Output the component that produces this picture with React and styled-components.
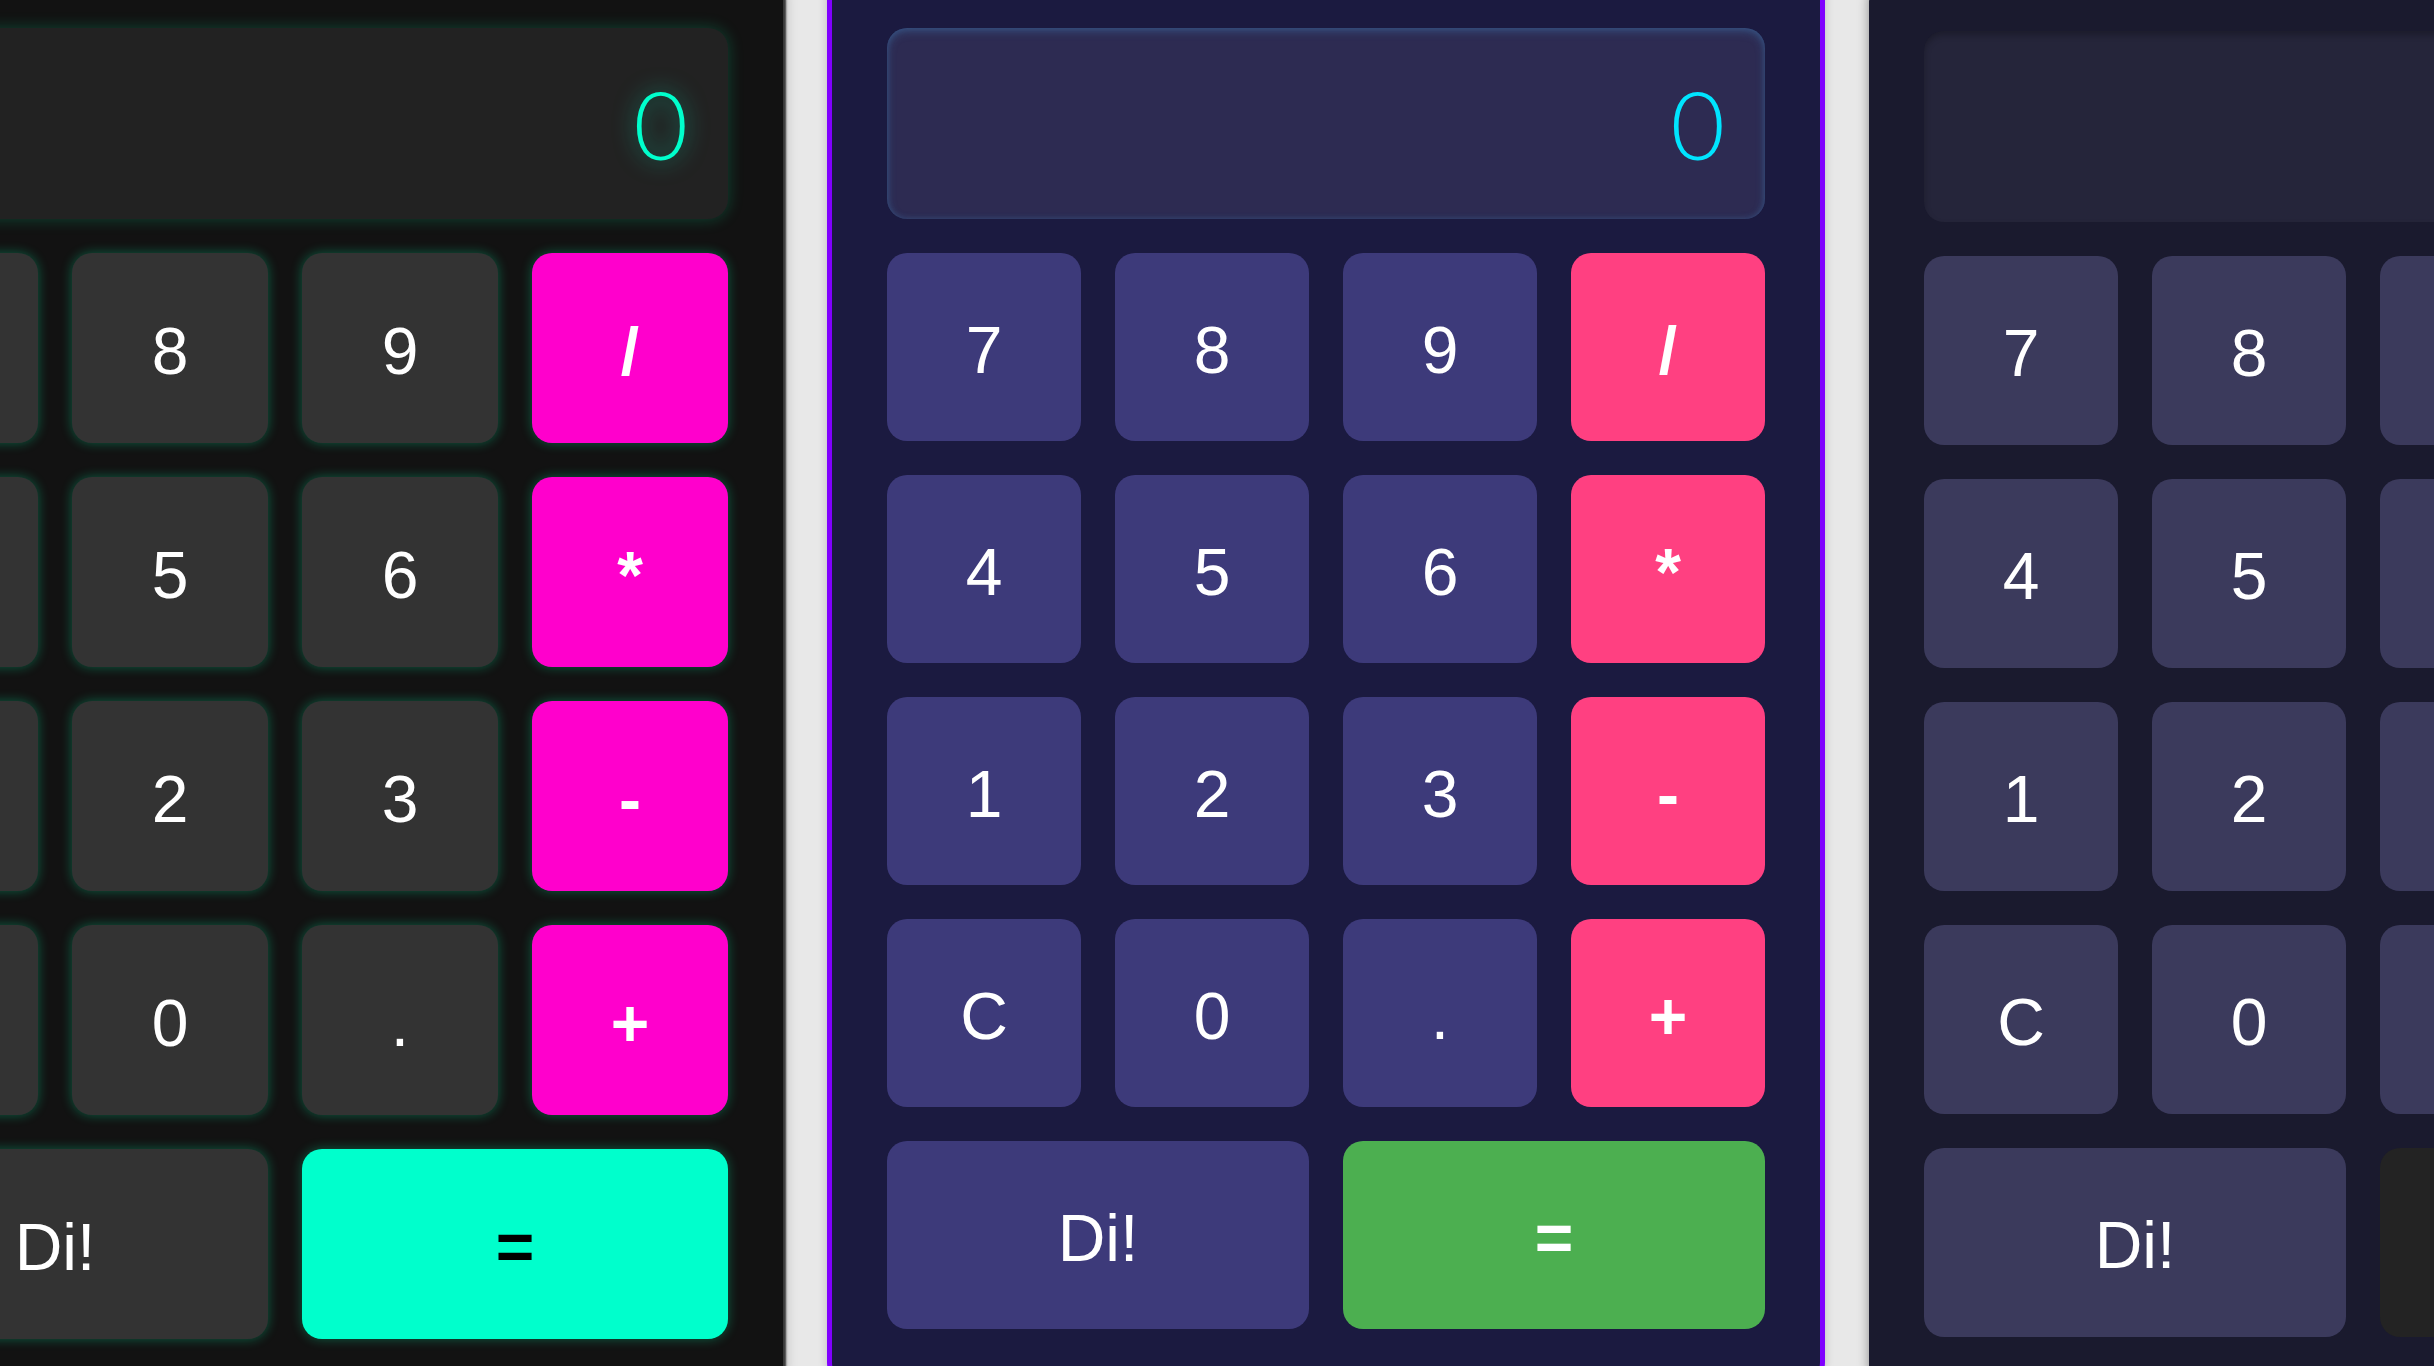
import React from 'react';
import styled, { createGlobalStyle } from 'styled-components';

const Global = createGlobalStyle`
  html, body { margin: 0; padding: 0; }
  body {
    background: #e8e8e8;
    overflow: hidden;
    font-family: "Liberation Sans", Arial, Helvetica, sans-serif;
  }
`;

const themes = {
  neon: {
    top: -28, col: 196, row: 190,
    bg: '#121212', border: 'none',
    panelShadow: '3px 0 2px rgba(40,40,40,0.9), 0 0 14px rgba(0,0,0,0.35)',
    displayBg: '#222222', displayShadow: '0 0 16px rgba(0,255,170,0.22)',
    displayColor: '#00ffcc', textGlow: '0 0 22px rgba(0,255,204,0.55)',
    keyBg: '#333333', keyColor: '#ffffff', keyShadow: '0 0 12px rgba(0,255,170,0.32)',
    opBg: '#ff00cc', opColor: '#ffffff', eqBg: '#00ffcc', eqColor: '#000000',
  },
  cosmic: {
    top: -33, col: 194, row: 188,
    bg: '#1b1a40', border: '5px solid #8000ff',
    panelShadow: '0 0 10px rgba(0,0,0,0.18)',
    displayBg: '#2d2b52', displayShadow: 'inset 0 3px 10px rgba(70,140,200,0.35), inset 0 0 6px rgba(70,140,200,0.2)',
    displayColor: '#00e5ff', textGlow: 'none',
    keyBg: '#3d3a7a', keyColor: '#ffffff', keyShadow: 'none',
    opBg: '#ff4081', opColor: '#ffffff', eqBg: '#4caf50', eqColor: '#ffffff',
  },
  midnight: {
    top: -25, col: 194, row: 189,
    bg: '#1a1a2e', border: 'none',
    panelShadow: '0 0 12px rgba(0,0,0,0.4)',
    displayBg: '#25253a', displayShadow: 'inset 0 4px 6px rgba(0,0,0,0.25)',
    displayColor: '#ffffff', textGlow: 'none',
    keyBg: '#3b3a5c', keyColor: '#ffffff', keyShadow: 'none',
    opBg: '#ff6b6b', opColor: '#ffffff', eqBg: '#232323', eqColor: '#ffffff',
  },
};

const Stage = styled.main`
  width: 2434px;
  height: 1366px;
  overflow: hidden;
  display: flex;
  align-items: flex-start;
`;

const Track = styled.div`
  flex: none;
  display: flex;
  align-items: flex-start;
  gap: 44px;
  margin-left: -213px;
`;

const Panel = styled.section`
  flex: none;
  box-sizing: border-box;
  margin-top: ${p => p.$t.top}px;
  padding: 56px 55px;
  background: ${p => p.$t.bg};
  border: ${p => p.$t.border};
  border-radius: 28px;
  box-shadow: ${p => p.$t.panelShadow};
  display: flex;
  flex-direction: column;
  gap: 34px;
`;

const Display = styled.div`
  box-sizing: border-box;
  height: 191px;
  border-radius: 20px;
  background: ${p => p.$t.displayBg};
  box-shadow: ${p => p.$t.displayShadow};
  display: flex;
  align-items: center;
  justify-content: flex-end;
  padding-right: 40px;
  color: ${p => p.$t.displayColor};
  font-family: "Lato", "Roboto", "Liberation Sans", sans-serif;
  font-weight: 300;
  font-size: 94px;
  line-height: 1;
  text-shadow: ${p => p.$t.textGlow};
`;

const Keys = styled.div`
  display: grid;
  grid-template-columns: repeat(4, ${p => p.$t.col}px);
  grid-auto-rows: ${p => p.$t.row}px;
  gap: 34px;
`;

const Key = styled.button`
  grid-column: span ${p => p.$span || 1};
  box-sizing: border-box;
  border: none;
  border-radius: 20px;
  margin: 0;
  padding: 5px 0 0;
  display: flex;
  align-items: center;
  justify-content: center;
  font-family: "Liberation Sans", Arial, Helvetica, sans-serif;
  font-size: 66px;
  line-height: 1;
  font-weight: ${p => (p.$kind === 'num' ? 400 : 700)};
  background: ${p => (p.$kind === 'op' ? p.$t.opBg : p.$kind === 'eq' ? p.$t.eqBg : p.$t.keyBg)};
  color: ${p => (p.$kind === 'op' ? p.$t.opColor : p.$kind === 'eq' ? p.$t.eqColor : p.$t.keyColor)};
  box-shadow: ${p => p.$t.keyShadow};
`;

const layout = [
  ['7', 'num'], ['8', 'num'], ['9', 'num'], ['/', 'op'],
  ['4', 'num'], ['5', 'num'], ['6', 'num'], ['*', 'op'],
  ['1', 'num'], ['2', 'num'], ['3', 'num'], ['-', 'op'],
  ['C', 'num'], ['0', 'num'], ['.', 'num'], ['+', 'op'],
  ['Di!', 'num', 2], ['=', 'eq', 2],
];

function Calculator({ theme }) {
  const t = themes[theme];
  return (
    <Panel $t={t}>
      <Display $t={t}>0</Display>
      <Keys $t={t}>
        {layout.map(([label, kind, span]) => (
          <Key key={label} $t={t} $kind={kind} $span={span}>{label}</Key>
        ))}
      </Keys>
    </Panel>
  );
}

export default function App() {
  return (
    <>
      <Global />
      <Stage>
        <Track>
          <Calculator theme="neon" />
          <Calculator theme="cosmic" />
          <Calculator theme="midnight" />
        </Track>
      </Stage>
    </>
  );
}
